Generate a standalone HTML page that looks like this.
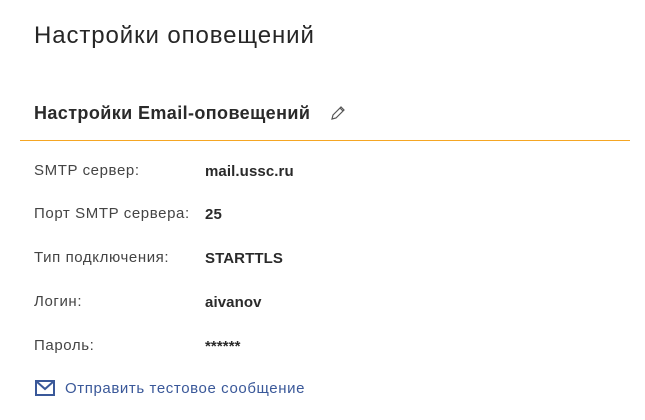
<!DOCTYPE html>
<html><head><meta charset="utf-8"><style>
body{margin:0;width:645px;height:420px;background:#fff;font-family:"Liberation Sans","Noto Sans CJK SC",sans-serif;position:relative;overflow:hidden}
.a{position:absolute;white-space:nowrap}
.t{left:34px;top:22px;font-size:24px;color:#262626;letter-spacing:0.9px}
.h{left:34px;top:103px;font-size:18px;color:#2a2a2a;font-weight:bold;letter-spacing:0.4px}
.line{position:absolute;left:20px;top:140px;width:610px;height:1px;background:#f5a623}
.l{left:34px;font-size:15px;color:#444;letter-spacing:0.6px}
.v{left:205px;font-size:15px;color:#2a2a2a;font-weight:bold;letter-spacing:0.1px}
.lk{left:65px;top:380px;font-size:15px;color:#3a5899;letter-spacing:0.6px}
</style></head><body>
<div class="a t">Настройки оповещений</div>
<div class="a h">Настройки Email-оповещений</div>
<svg class="a" style="left:330px;top:105px" width="16" height="16" viewBox="0 0 16 16"><path d="M2 14l1-4 8-8 3 3-8 8z M10 3l3 3" fill="none" stroke="#555" stroke-width="1.2"/></svg>
<div class="line"></div>
<div class="a l" style="top:162px">SMTP сервер:</div><div class="a v" style="top:163px">mail.ussc.ru</div>
<div class="a l" style="top:205px">Порт SMTP сервера:</div><div class="a v" style="top:206px">25</div>
<div class="a l" style="top:249px">Тип подключения:</div><div class="a v" style="top:250px">STARTTLS</div>
<div class="a l" style="top:293px">Логин:</div><div class="a v" style="top:294px">aivanov</div>
<div class="a l" style="top:337px">Пароль:</div><div class="a v" style="top:338px">******</div>
<svg class="a" style="left:35px;top:380px" width="20" height="16" viewBox="0 0 20 16"><rect x="1" y="1" width="18" height="14" fill="none" stroke="#3a5899" stroke-width="2"/><path d="M1 1l9 8 9-8" fill="none" stroke="#3a5899" stroke-width="2"/></svg>
<div class="a lk">Отправить тестовое сообщение</div>
</body></html>
